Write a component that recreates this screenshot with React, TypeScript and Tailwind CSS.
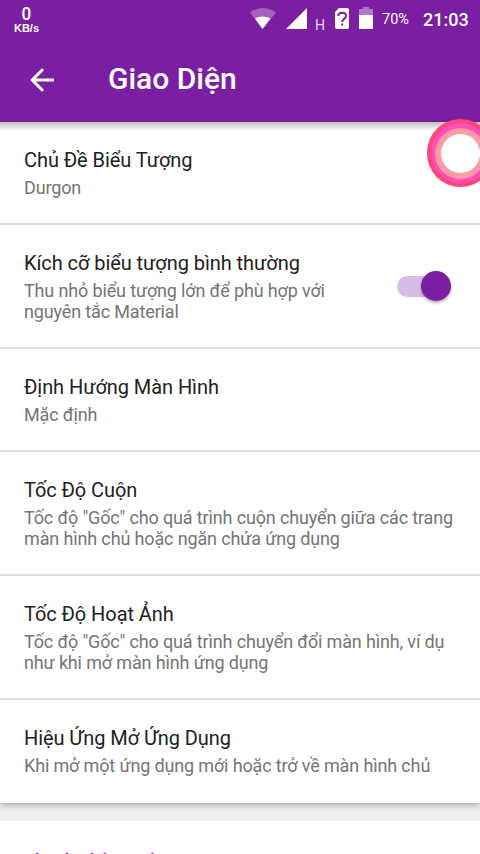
import React from 'react';

interface Preference {
  title: string;
  summary: string[];
  enabled?: boolean;
}

const preferences: Preference[] = [
  { title: 'Chủ Đề Biểu Tượng', summary: ['Durgon'] },
  {
    title: 'Kích cỡ biểu tượng bình thường',
    summary: ['Thu nhỏ biểu tượng lớn để phù hợp với', 'nguyên tắc Material'],
    enabled: true,
  },
  { title: 'Định Hướng Màn Hình', summary: ['Mặc định'] },
  {
    title: 'Tốc Độ Cuộn',
    summary: ['Tốc độ "Gốc" cho quá trình cuộn chuyển giữa các trang', 'màn hình chủ hoặc ngăn chứa ứng dụng'],
  },
  {
    title: 'Tốc Độ Hoạt Ảnh',
    summary: ['Tốc độ "Gốc" cho quá trình chuyển đổi màn hình, ví dụ', 'như khi mở màn hình ứng dụng'],
  },
  { title: 'Hiệu Ứng Mở Ứng Dụng', summary: ['Khi mở một ứng dụng mới hoặc trở về màn hình chủ'] },
];

function StatusBar() {
  return (
    <div className="flex h-[37px] items-start text-white">
      <div className="ml-[13px] mt-[5px] flex w-[27px] flex-col items-center">
        <span className="scale-x-90 text-[19px] font-medium leading-[18px]">0</span>
        <span className="whitespace-nowrap font-['Liberation_Sans'] text-[11px] font-bold leading-[10px]">KB/s</span>
      </div>
      <svg className="ml-[210px] mt-[8px] h-[21px] w-[26px] shrink-0" viewBox="0 0 26 21" fill="#fff">
        <path d="M0 4.500Q13-4.500 26 4.500L12.500 21Z" opacity=".3" />
        <path d="M5 10.500Q12.500 6.500 20.500 10.500L12.500 21Z" />
      </svg>
      <svg className="ml-[10px] mt-[8px] h-[21px] w-[21px] shrink-0" viewBox="0 0 21 21" fill="#fff">
        <path d="M21 0V21H0Z" />
      </svg>
      <span className="ml-[8px] mt-[18px] w-[10px] text-[14px] leading-[14px] text-[#e6d6ec]">H</span>
      <svg className="ml-[10px] mt-[8px] h-[21px] w-[14px] shrink-0" viewBox="0 0 14 21">
        <path d="M4 0H12Q14 0 14 2V19Q14 21 12 21H2Q0 21 0 19V4Z" fill="#fff" />
        <path
          d="M3.300 8C3.300 3.600 11 3.600 11 8C11 10.700 7.200 11 7.200 14"
          fill="none"
          stroke="#7b1fa2"
          strokeWidth="2"
        />
        <path d="M6.200 15.500H8.200V17.500H6.200Z" fill="#7b1fa2" />
      </svg>
      <svg className="ml-[10px] mt-[7px] h-[22px] w-[14px] shrink-0" viewBox="0 0 14 22" fill="#fff">
        <path d="M0 2H4V0H10V2H14V8H0Z" opacity=".4" />
        <path d="M0 8H14V22H0Z" />
      </svg>
      <span className="ml-[9px] mt-[12px] w-[28px] text-[14.500px] leading-[16px]">70%</span>
      <span className="ml-[13px] mt-[10px] text-[18px] font-medium leading-[20px]">21:03</span>
    </div>
  );
}

function Toggle() {
  return (
    <div className="mt-[21px] flex h-[30px] w-[54px] shrink-0 items-center">
      <div className="h-[21px] w-[40px] rounded-full bg-[#d7bce3]" />
      <div className="-ml-[16px] h-[30px] w-[30px] shrink-0 rounded-full bg-[#7b1fa2] shadow-[0_2px_3px_rgba(0,0,0,0.3)]" />
    </div>
  );
}

export default function App() {
  return (
    <div className="relative flex h-[854px] w-[480px] flex-col overflow-hidden bg-[#eeeeee] font-[Roboto,sans-serif]">
      <header className="h-[122px] shrink-0 bg-[#7b1fa2] text-white">
        <StatusBar />
        <div className="flex h-[84px] items-center pl-[30px]">
          <svg className="mt-[2px] h-[24px] w-[24px]" viewBox="0 0 24 24" fill="none" stroke="#fff" strokeWidth="3">
            <path d="M24 12H2.500M13 1.200L2.200 12L13 22.800" />
          </svg>
          <h1 className="ml-[54px] text-[30px] font-medium leading-[36px]">Giao Diện</h1>
        </div>
      </header>

      <main className="h-[681px] shrink-0 bg-white shadow-[0_2px_6px_rgba(0,0,0,0.3)]">
        {preferences.map((item, index) => (
          <div
            key={index}
            className="flex justify-between border-b-2 border-[#e0e0e0] pb-[25px] pl-[24px] pr-[29px] pt-[25px] last:border-b-0"
          >
            <div className="whitespace-nowrap">
              <h2 className="text-[20px] leading-[26px] tracking-[-0.07px] text-[#212121]">{item.title}</h2>
              <div className="pt-[4px] text-[18px] leading-[21px] tracking-[-0.145px] text-[#757575]">
                {item.summary.map((line) => (
                  <p key={line}>{line}</p>
                ))}
              </div>
            </div>
            {item.enabled && <Toggle />}
          </div>
        ))}
      </main>

      <section className="mt-[18px] h-[33px] shrink-0 overflow-hidden bg-white pl-[24px] pt-[27px]">
        <h2 className="whitespace-nowrap text-[18px] font-medium leading-[26px] text-[#7b1fa2]">Thanh Thông Báo</h2>
      </section>

      {/* header shadow */}
      <div className="absolute left-0 top-[122px] h-[9px] w-full bg-gradient-to-b from-black/25 to-transparent" />

      {/* floating assistive button */}
      <div className="absolute left-[427px] top-[119px] flex h-[68px] w-[67px] items-center justify-center rounded-full bg-[#ff4778]">
        <div className="flex h-[60px] w-[59px] items-center justify-center rounded-full bg-[#ff4fb9]">
          <div className="flex h-[51px] w-[51px] items-center justify-center rounded-full bg-[#ff9ba6]">
            <div className="h-[39px] w-[39px] rounded-full bg-white" />
          </div>
        </div>
      </div>
    </div>
  );
}
